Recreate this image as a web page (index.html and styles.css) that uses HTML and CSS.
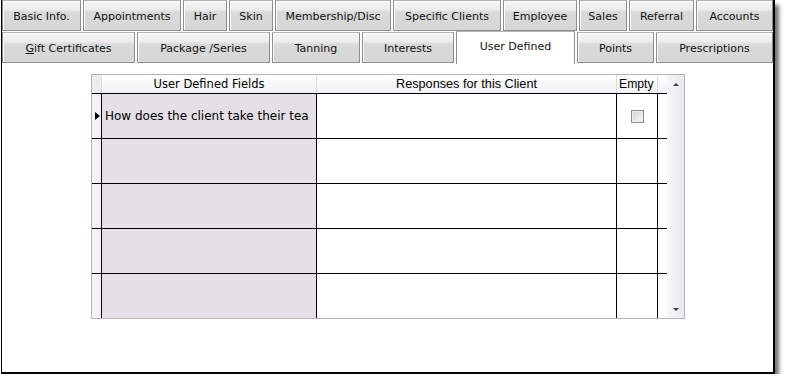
FILE: index.html
```html
<!DOCTYPE html>
<html lang="en">
<head>
    <meta charset="UTF-8">
    <title>Client - User Defined</title>
    <link rel="stylesheet" href="styles.css">
</head>
<body>
    <div class="window">
        <div class="tab-row first-row">
            <div class="tab">Basic Info.</div>
            <div class="tab">Appointments</div>
            <div class="tab">Hair</div>
            <div class="tab">Skin</div>
            <div class="tab">Membership/Disc</div>
            <div class="tab">Specific Clients</div>
            <div class="tab">Employee</div>
            <div class="tab">Sales</div>
            <div class="tab">Referral</div>
            <div class="tab">Accounts</div>
        </div>
        <div class="tab-row second-row">
            <div class="tab"><span><u>G</u>ift Certificates</span></div>
            <div class="tab">Package /Series</div>
            <div class="tab">Tanning</div>
            <div class="tab">Interests</div>
            <div class="tab active">User Defined</div>
            <div class="tab">Points</div>
            <div class="tab">Prescriptions</div>
        </div>

        <div class="panel">
            <div class="grid">
                <div class="grid-body">
                    <div class="grid-row header">
                        <div class="cell ind"></div>
                        <div class="cell field">User Defined Fields</div>
                        <div class="cell resp">Responses for this Client</div>
                        <div class="cell empty">Empty</div>
                        <div class="cell pad"></div>
                    </div>
                    <div class="grid-row">
                        <div class="cell ind"><span class="current"></span></div>
                        <div class="cell field">How does the client take their tea</div>
                        <div class="cell resp"></div>
                        <div class="cell empty"><span class="checkbox"></span></div>
                        <div class="cell pad"></div>
                    </div>
                    <div class="grid-row">
                        <div class="cell ind"></div>
                        <div class="cell field"></div>
                        <div class="cell resp"></div>
                        <div class="cell empty"></div>
                        <div class="cell pad"></div>
                    </div>
                    <div class="grid-row">
                        <div class="cell ind"></div>
                        <div class="cell field"></div>
                        <div class="cell resp"></div>
                        <div class="cell empty"></div>
                        <div class="cell pad"></div>
                    </div>
                    <div class="grid-row">
                        <div class="cell ind"></div>
                        <div class="cell field"></div>
                        <div class="cell resp"></div>
                        <div class="cell empty"></div>
                        <div class="cell pad"></div>
                    </div>
                    <div class="grid-row">
                        <div class="cell ind"></div>
                        <div class="cell field"></div>
                        <div class="cell resp"></div>
                        <div class="cell empty"></div>
                        <div class="cell pad"></div>
                    </div>
                </div>
                <div class="scrollbar">
                    <span class="arrow up"></span>
                    <span class="arrow down"></span>
                </div>
            </div>
        </div>
    </div>
</body>
</html>
```

FILE: styles.css
```css
body {
    margin: 0;
    background-color: #ffffff;
    font-family: 'DejaVu Sans', sans-serif;
    color: #000;
}

.window {
    margin-left: 1px;
    width: 771px;
    height: 372px;
    border-left: 1px solid #000;
    border-right: 2px solid #000;
    border-bottom: 2px solid #000;
    box-shadow: 4px 5px 4px rgba(0, 0, 0, 0.55);
    background-color: #fff;
}

/* tabs */

.tab-row {
    display: grid;
    column-gap: 2px;
    height: 31px;
}

.first-row {
    grid-template-columns: 79px 98px 44px 44px 116px 108px 74px 48px 65px 77px;
    margin-bottom: 1px;
}

.second-row {
    grid-template-columns: 133px 133px 88px 92px 119px 77px 117px;
}

.tab {
    display: flex;
    align-items: center;
    justify-content: center;
    box-sizing: border-box;
    height: 31px;
    padding-top: 2px;
    border: 1px solid #8e8e8e;
    border-top-color: #b4b4b4;
    background: linear-gradient(#f6f6f6 0%, #ececec 30%, #dadada 38%, #d6d6d6 100%);
    box-shadow: inset 1px 1px 0 #fafafa;
    font-size: 11px;
    color: #111;
    white-space: nowrap;
}

.tab.active {
    margin-top: -1px;
    height: 33px;
    border-bottom: none;
    background: #fff;
    box-shadow: none;
    padding-top: 0;
    padding-bottom: 4px;
    position: relative;
}

/* grid */

.panel {
    height: 309px;
    padding: 11px 0 0 89px;
    box-sizing: border-box;
}

.grid {
    display: flex;
    width: 592px;
    border: 1px solid #b4b4b4;
}

.grid-body {
    width: 575px;
}

.grid-row {
    display: grid;
    grid-template-columns: 9px 215px 300px 41px 10px;
    height: 45px;
    border-top: 1px solid #000;
    box-sizing: border-box;
}

.grid-row.header {
    height: 18px;
    border-top: none;
    background: linear-gradient(#ffffff, #f1f1f5);
}

.cell {
    box-sizing: border-box;
    border-left: 1px solid #000;
    display: flex;
    align-items: center;
    overflow: hidden;
    white-space: nowrap;
}

.cell.ind {
    border-left: none;
    background-color: #f6f1f6;
    justify-content: center;
}

.cell.field {
    background-color: #e5dfe7;
    padding-left: 3px;
    font-size: 12px;
}

.cell.empty {
    justify-content: center;
}

.header .cell {
    border-left-color: #dcdce0;
    justify-content: center;
    background: none;
    padding: 0;
}

.header .cell.ind {
    background-color: #ececf0;
}

.header .cell.field {
    font-size: 11.5px;
}

.header .cell.resp,
.header .cell.empty {
    font-family: 'Liberation Sans', Arial, sans-serif;
    font-size: 12.7px;
}

.header .cell.empty {
    font-size: 12.2px;
    justify-content: flex-start;
    padding-left: 2px;
}

.current {
    width: 0;
    height: 0;
    border-top: 4px solid transparent;
    border-bottom: 4px solid transparent;
    border-left: 5px solid #000;
    margin-left: 2px;
}

.checkbox {
    width: 13px;
    height: 13px;
    box-sizing: border-box;
    border: 1px solid #8e8e8e;
    background: linear-gradient(135deg, #d4d4d8, #f6f6f8);
    box-shadow: inset 0 0 0 1px #eeeeee;
}

/* scrollbar */

.scrollbar {
    position: relative;
    width: 17px;
    background: linear-gradient(to right, #f8f6f9, #ebe8ee);
}

.arrow {
    position: absolute;
    left: 6px;
    width: 0;
    height: 0;
    border-left: 3px solid transparent;
    border-right: 3px solid transparent;
}

.arrow.up {
    top: 8px;
    border-bottom: 3px solid #3c3c3c;
}

.arrow.down {
    bottom: 7px;
    border-top: 3px solid #3c3c3c;
}
```
